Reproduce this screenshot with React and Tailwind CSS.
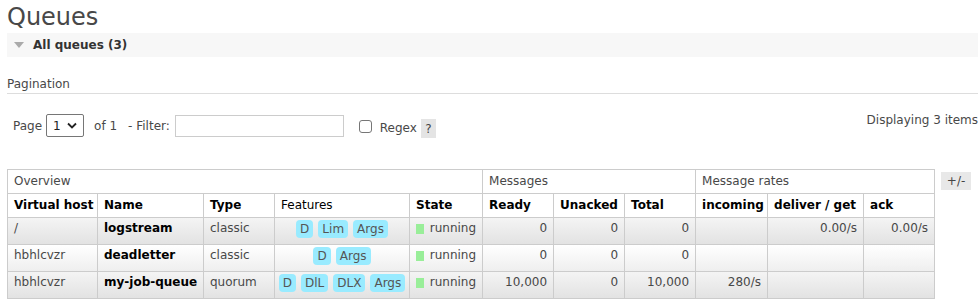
const rows = [
  { vhost: "/", name: "logstream", type: "classic", features: ["D", "Lim", "Args"], ready: "0", unacked: "0", total: "0", incoming: "", deliver: "0.00/s", ack: "0.00/s", alt: true },
  { vhost: "hbhlcvzr", name: "deadletter", type: "classic", features: ["D", "Args"], ready: "0", unacked: "0", total: "0", incoming: "", deliver: "", ack: "", alt: false },
  { vhost: "hbhlcvzr", name: "my-job-queue", type: "quorum", features: ["D", "DlL", "DLX", "Args"], ready: "10,000", unacked: "0", total: "10,000", incoming: "280/s", deliver: "", ack: "", alt: true },
];

function Badge({ children }) {
  return (
    <span className="inline-block h-[18px] leading-[18px] px-[4px] rounded-[4px] bg-[#99ebff] text-[#555]">
      {children}
    </span>
  );
}

export default function App() {
  const td = "border border-[#ccc] px-[6px] pt-[3px] pb-0 align-top h-[27px] leading-[15px]";
  const th = "border border-[#ccc] px-[6px] h-[24px] text-left align-middle leading-[15px]";
  return (
    <div className="w-[978px] h-[306px] overflow-hidden bg-white text-[#484848] text-[12px] font-['DejaVu_Sans',Verdana,sans-serif] pl-[7px]">
      {/* title */}
      <h1 className="text-[24px] leading-[28px] pt-[3px] text-[#484848] font-normal">Queues</h1>

      {/* section bar */}
      <div className="h-[24px] mt-[2px] bg-[#f7f7f7] flex items-center pl-[7px]">
        <span className="w-0 h-0 border-l-[5px] border-r-[5px] border-t-[6px] border-l-transparent border-r-transparent border-t-[#aaa] mr-[9px]" />
        <span className="font-bold text-[#333]">All queues (3)</span>
      </div>

      <div className="mt-[20px] leading-[14px] pb-[2px] border-b border-[#ddd] text-[#484848]">Pagination</div>

      {/* pagination controls */}
      <div className="flex items-start h-[75px] pt-[19px]">
        <div className="flex items-center pl-[6px] w-[861px]">
          <span>Page</span>
          <div className="ml-[4px] w-[38px] h-[23px] border border-[#767676] rounded-[2px] flex items-center justify-between px-[6px]">
            <span className="text-[#222]">1</span>
            <svg width="10" height="7" viewBox="0 0 10 7"><path d="M1 1.5 L5 5.5 L9 1.5" fill="none" stroke="#222" strokeWidth="1.8" /></svg>
          </div>
          <span className="ml-[10px]">of 1</span>
          <span className="ml-[11px]">- Filter:</span>
          <div className="ml-[5px] w-[169px] h-[22px] border border-[#ccc]" />
          <div className="ml-[15px] w-[13px] h-[13px] border border-[#767676] rounded-[3px] mt-[2px]" />
          <span className="ml-[8px] mt-[4px]">Regex</span>
          <span className="ml-[4px] mt-[6px] w-[15px] h-[19px] bg-[#e4e4e4] flex items-center justify-center text-[#444]">?</span>
        </div>
        <span className="whitespace-nowrap leading-[14px] text-[#484848]">Displaying 3 items</span>
      </div>

      {/* table + toggle */}
      <div className="flex items-start">
        <table className="table-fixed border-collapse w-[927px]">
          <colgroup>
            <col className="w-[90px]" />
            <col className="w-[106px]" />
            <col className="w-[71px]" />
            <col className="w-[135px]" />
            <col className="w-[73px]" />
            <col className="w-[71px]" />
            <col className="w-[71px]" />
            <col className="w-[71px]" />
            <col className="w-[72px]" />
            <col className="w-[96px]" />
            <col className="w-[71px]" />
          </colgroup>
          <thead>
            <tr>
              <th colSpan={5} className={`${th} font-normal text-[#484848]`}>Overview</th>
              <th colSpan={3} className={`${th} font-normal text-[#484848]`}>Messages</th>
              <th colSpan={3} className={`${th} font-normal text-[#484848]`}>Message rates</th>
            </tr>
            <tr className="text-black">
              <th className={`${th} whitespace-nowrap`}>Virtual host</th>
              <th className={th}>Name</th>
              <th className={th}>Type</th>
              <th className={`${th} font-normal`}>Features</th>
              <th className={th}>State</th>
              <th className={th}>Ready</th>
              <th className={th}>Unacked</th>
              <th className={th}>Total</th>
              <th className={th}>incoming</th>
              <th className={`${th} whitespace-nowrap`}>deliver / get</th>
              <th className={th}>ack</th>
            </tr>
          </thead>
          <tbody>
            {rows.map((r) => (
              <tr key={r.name} className={r.alt ? "bg-gradient-to-b from-[#f4f4f4] to-[#e2e2e2]" : "bg-gradient-to-b from-[#ffffff] to-[#eeeeee]"}>
                <td className={td}>{r.vhost}</td>
                <td className={`${td} font-bold text-black whitespace-nowrap`}>{r.name}</td>
                <td className={td}>{r.type}</td>
                <td className={`${td} text-center !pt-[2px]`}>
                  <div className="flex justify-center gap-[5px]">
                    {r.features.map((f) => (
                      <Badge key={f}>{f}</Badge>
                    ))}
                  </div>
                </td>
                <td className={td}>
                  <div className="flex items-center">
                    <span className="w-[10px] h-[10px] bg-[#99ee99] mr-[6px]" />
                    running
                  </div>
                </td>
                <td className={`${td} text-right`}>{r.ready}</td>
                <td className={`${td} text-right`}>{r.unacked}</td>
                <td className={`${td} text-right`}>{r.total}</td>
                <td className={`${td} text-right`}>{r.incoming}</td>
                <td className={`${td} text-right`}>{r.deliver}</td>
                <td className={`${td} text-right`}>{r.ack}</td>
              </tr>
            ))}
          </tbody>
        </table>
        <button className="ml-[6px] mt-[3px] w-[30px] h-[18px] bg-[#e8e8e8] text-[#444] text-[12px] leading-[18px]">+/-</button>
      </div>
    </div>
  );
}
